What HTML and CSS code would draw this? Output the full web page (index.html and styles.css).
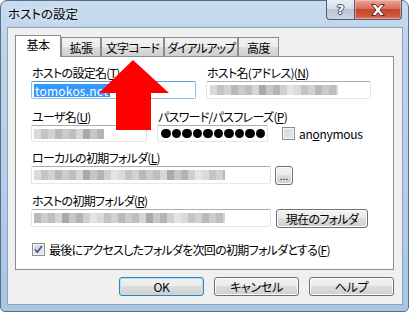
FILE: index.html
```html
<!DOCTYPE html>
<html lang="ja">
<head>
<meta charset="utf-8">
<title>ホストの設定</title>
<link rel="stylesheet" href="styles.css">
</head>
<body>
<div class="window">
  <div class="titlebar">
    <span class="title">ホストの設定</span>
    <div class="caption-btns">
      <div class="cbtn help"><span>?</span></div>
      <div class="cbtn close">
        <svg width="16" height="12" viewBox="0 0 16 12"><path d="M1.5 0.5h4l2.5 3 2.5-3h4l-4.5 5.5 4.5 5.5h-4l-2.5-3-2.5 3h-4l4.5-5.5z" fill="#fff" stroke="#5a2a20" stroke-width="1"/></svg>
      </div>
    </div>
  </div>
  <div class="client">
    <div class="tabs">
      <div class="tab active t1">基本</div>
      <div class="tab t2">拡張</div>
      <div class="tab t3">文字コード</div>
      <div class="tab t4">ダイアルアップ</div>
      <div class="tab t5">高度</div>
    </div>
    <div class="panel">
      <div class="row r1">
        <div class="field w165">
          <div class="label">ホストの設定名(<u>T</u>)</div>
          <div class="input focus h18"><span class="sel">tomokos.net</span><span class="caret"></span></div>
        </div>
        <div class="field w165">
          <div class="label">ホスト名(アドレス)(<u>N</u>)</div>
          <div class="input h18"><span class="blur bw-host"></span></div>
        </div>
      </div>
      <div class="row r2">
        <div class="field w116">
          <div class="label">ユーザ名(<u>U</u>)</div>
          <div class="input h17"><span class="blur bw-user"></span></div>
        </div>
        <div class="field w111">
          <div class="label">パスワード/パスフレーズ(<u>P</u>)</div>
          <div class="input h17 dots"><i></i><i></i><i></i><i></i><i></i><i></i><i></i><i></i><i></i><i></i></div>
        </div>
        <div class="check anon"><span class="box"></span><span class="latin">an<u>o</u>nymous</span></div>
      </div>
      <div class="row r3">
        <div class="field">
          <div class="label">ローカルの初期フォルダ(<u>L</u>)</div>
          <div class="line">
            <div class="input h18 w240"><span class="blur bw-path"></span></div>
            <div class="btn small">...</div>
          </div>
        </div>
      </div>
      <div class="row r4">
        <div class="field">
          <div class="label">ホストの初期フォルダ(<u>R</u>)</div>
          <div class="line">
            <div class="input h18 w240"><span class="blur bw-path2"></span></div>
            <div class="btn cur">現在のフォルダ</div>
          </div>
        </div>
      </div>
      <div class="check last">
        <span class="box checked"><svg width="9" height="9" viewBox="0 0 9 9"><path d="M1 4.5l2.3 2.6L8 1" fill="none" stroke="#3c5aa0" stroke-width="1.8"/></svg></span>
        <span>最後にアクセスしたフォルダを次回の初期フォルダとする(<u>F</u>)</span>
      </div>
    </div>
    <div class="buttons">
      <div class="btn big default">OK</div>
      <div class="btn big">キャンセル</div>
      <div class="btn big">ヘルプ</div>
    </div>
  </div>
  <svg class="arrow" width="409" height="312" viewBox="0 0 409 312"><polygon points="133,60 169,93 151,93 151,130 116,130 116,93 99,93" fill="#ff0000"/></svg>
</div>
</body>
</html>
```
FILE: styles.css
```css
* { box-sizing: border-box; }
html, body { margin: 0; padding: 0; }
body {
  width: 409px; height: 312px; overflow: hidden;
  font-family: "Noto Sans CJK JP", "Noto Sans", sans-serif;
  font-size: 12px;
  font-feature-settings: "palt";
  letter-spacing: -0.7px;
  color: #000;
  background: #fff;
}
u { text-decoration: underline; text-underline-offset: 1px; }

.window {
  position: relative;
  width: 409px; height: 312px;
  border: 1px solid #5b6d80;
  border-radius: 7px 7px 5px 5px;
  background: linear-gradient(180deg, #c9dcf0 0%, #bed4ec 12%, #b4cde8 60%, #a9c5e3 100%);
  display: flex; flex-direction: column;
}
.titlebar {
  height: 26px;
  display: flex; align-items: flex-start;
  padding-left: 7px;
}
.title { line-height: 26px; font-size: 12.5px; letter-spacing: 0; color: #000; text-shadow: 0 0 6px rgba(255,255,255,0.9); }
.caption-btns { margin-left: auto; margin-right: 6px; margin-top: -1px; display: flex; }
.cbtn {
  height: 20px; display: flex; align-items: center; justify-content: center;
  border: 1px solid #4f5e70; border-top: none;
}
.help {
  width: 28px; border-radius: 0 0 0 4px; border-right: none;
  background: linear-gradient(180deg, #e8eef5 0%, #d4dde8 45%, #b9c6d5 50%, #c9d5e2 100%);
}
.help span {
  font-family: "DejaVu Sans", sans-serif; font-weight: bold; font-size: 13px; color: #fff;
  letter-spacing: 0;
  text-shadow: 1px 0 0 #3e4a58, -1px 0 0 #3e4a58, 0 1px 0 #3e4a58, 0 -1px 0 #3e4a58;
  line-height: 18px;
}
.close {
  width: 48px; border-radius: 0 0 4px 0;
  background: linear-gradient(180deg, #e9a899 0%, #d86f5c 45%, #c7432d 50%, #d4553d 85%, #e07a62 100%);
  box-shadow: inset 0 0 0 1px rgba(255,210,200,0.5);
}

.client {
  margin: 0 5px 0 6px;
  height: 278px;
  background: #f0f0f0;
  border: 1px solid #8fa3b8;
  display: flex; flex-direction: column;
}
.tabs {
  margin-top: 7px;
  padding-left: 7px;
  height: 21px;
  display: flex; align-items: flex-end;
  position: relative; z-index: 2;
}
.tab {
  height: 19px;
  border: 1px solid #898c95; border-bottom: none;
  background: linear-gradient(180deg, #f3f3f3 0%, #ebebeb 50%, #dddddd 51%, #cfcfcf 100%);
  text-align: center; line-height: 17px; padding-top: 1px;
  white-space: nowrap;
  letter-spacing: -0.6px;
}
.tab.active {
  height: 22px; margin-bottom: -1px;
  background: #fff; line-height: 17px; padding-top: 0;
}
.t1 { width: 46px; }
.t2 { width: 40px; }
.t3 { width: 63px; }
.t4 { width: 74px; letter-spacing: -1.1px; }
.t5 { width: 41px; }

.panel {
  margin: 0 8px 0 7px;
  height: 214px;
  background: #fff;
  border: 1px solid #898c95;
  padding: 7px 0 0 15px;
  display: flex; flex-direction: column;
}
.row { display: flex; align-items: flex-end; }
.r1 { gap: 10px; }
.r2 { margin-top: 9px; gap: 10px; }
.r3, .r4 { margin-top: 7px; }
.field { display: flex; flex-direction: column; }
.label { height: 17px; line-height: 17px; padding-left: 1px; white-space: nowrap; }
.w165 { width: 165px; }
.w116 { width: 116px; }
.w111 { width: 111px; }
.w240 { width: 240px; }
.h18 { height: 18px; }
.h17 { height: 17px; }
.input {
  border: 1px solid #e2e3ea; border-top-color: #abadb3; border-bottom-color: #e3e9ef;
  border-radius: 2px;
  background: #fff;
  display: flex; align-items: center;
  padding-left: 2px;
}
.input.focus { border-color: #8fbde6; border-top-color: #5e9bd2; }
.sel {
  background: #3399ff; color: #fff; line-height: 13px; height: 13px;
  padding: 0 1px; font-size: 12px; letter-spacing: 0.2px;
}
.caret { width: 1px; height: 13px; background: #9a5a20; }
.blur {
  display: block; height: 10px;
  background: linear-gradient(90deg, #dadada 0 7px, #c4c4c4 7px 14px, #d2d2d2 14px 21px, #b9b9b9 21px 28px, #cbcbcb 28px 35px, #bebebe 35px 42px, #d6d6d6 42px 49px, #a9a9a9 49px 56px, #c7c7c7 56px 63px, #b4b4b4 63px 70px, #d0d0d0 70px 77px, #e4e4e4 77px 84px);
  background-size: 84px 10px; background-repeat: repeat-x;
}
.bw-host { width: 128px; margin-left: 1px; }
.bw-user { width: 70px; }
.bw-path { width: 191px; }
.bw-path2 { width: 191px; background-position: -21px 0; }
.dots { gap: 1px; padding-left: 3px; }
.dots i { width: 9.5px; height: 9.5px; border-radius: 50%; background: #000; display: block; }

.check { display: flex; align-items: center; gap: 4px; white-space: nowrap; }
.anon { margin-left: 4px; height: 17px; }
.latin { font-family: "Noto Sans CJK JP", sans-serif; letter-spacing: -0.3px; }
.box {
  width: 13px; height: 13px; border: 1px solid #8e8f8f;
  background: linear-gradient(135deg, #cbcfd5 0%, #eef0f2 100%);
  box-shadow: inset 0 0 0 1px #f4f4f4, inset 0 0 0 2px #dfe1e4;
  display: flex; align-items: center; justify-content: center;
}
.last { margin-top: 13px; height: 16px; padding-left: 1px; }

.line { display: flex; align-items: flex-start; gap: 4px; }
.btn {
  border: 1px solid #707070; border-radius: 3px;
  background: linear-gradient(180deg, #f2f2f2 0%, #ebebeb 49%, #dddddd 50%, #cfcfcf 100%);
  box-shadow: inset 0 0 0 1px #fbfbfb;
  display: flex; align-items: center; justify-content: center;
  white-space: nowrap;
}
.btn.small { width: 18px; height: 19px; font-size: 10px; line-height: 10px; letter-spacing: 0; }
.btn.cur { width: 92px; height: 19px; margin-left: 1px; }
.buttons {
  margin-top: 7px;
  padding-right: 8px;
  display: flex; justify-content: flex-end; gap: 10px;
}
.btn.big { width: 85px; height: 19px; letter-spacing: -0.3px; }
.btn.default {
  border-color: #3c7fb1;
  box-shadow: inset 0 0 0 1px #b2e0f8;
}
.arrow { position: absolute; left: -1px; top: -1px; pointer-events: none; }
```
